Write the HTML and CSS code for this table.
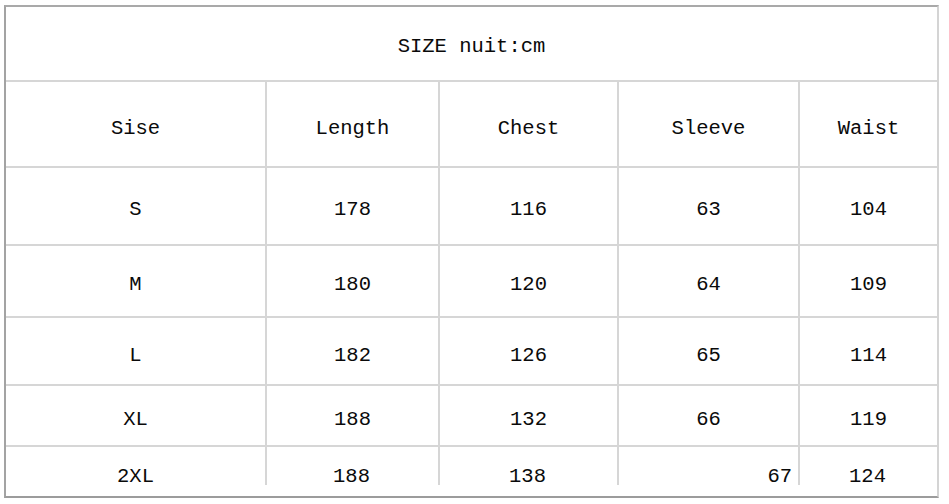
FILE: index.html
```html
<!DOCTYPE html>
<html lang="en">
<head>
<meta charset="utf-8">
<title>SIZE nuit:cm</title>
<link rel="stylesheet" href="styles.css">
</head>
<body>
<div class="sheet">
  <div class="title">SIZE nuit:cm</div>
  <div class="row row-head">
    <div class="cell">Sise</div>
    <div class="cell">Length</div>
    <div class="cell">Chest</div>
    <div class="cell">Sleeve</div>
    <div class="cell">Waist</div>
  </div>
  <div class="row row-s">
    <div class="cell">S</div>
    <div class="cell">178</div>
    <div class="cell">116</div>
    <div class="cell">63</div>
    <div class="cell">104</div>
  </div>
  <div class="row row-m">
    <div class="cell">M</div>
    <div class="cell">180</div>
    <div class="cell">120</div>
    <div class="cell">64</div>
    <div class="cell">109</div>
  </div>
  <div class="row row-l">
    <div class="cell">L</div>
    <div class="cell">182</div>
    <div class="cell">126</div>
    <div class="cell">65</div>
    <div class="cell">114</div>
  </div>
  <div class="row row-xl">
    <div class="cell">XL</div>
    <div class="cell">188</div>
    <div class="cell">132</div>
    <div class="cell">66</div>
    <div class="cell">119</div>
  </div>
  <div class="row row-last">
    <div class="cell">2XL</div>
    <div class="cell">188</div>
    <div class="cell">138</div>
    <div class="cell cell-right">67</div>
    <div class="cell">124</div>
  </div>
</div>
</body>
</html>
```

FILE: styles.css
```css
html, body {
  margin: 0;
  padding: 0;
  background: #ffffff;
}

body {
  font-family: "Liberation Mono", "DejaVu Sans Mono", monospace;
  font-size: 20.5px;
  color: #0a0a0a;
}

.sheet {
  box-sizing: border-box;
  width: 935px;
  margin: 5px 0 0 4px;
  border-top: 2px solid #a9a9a9;
  border-left: 2px solid #a3a3a3;
  border-right: 2px solid #d4d4d4;
  border-bottom: 2px solid #9c9c9c;
  display: flex;
  flex-direction: column;
}

.title {
  box-sizing: border-box;
  height: 75px;
  border-bottom: 2px solid #d6d6d6;
  display: flex;
  align-items: center;
  justify-content: center;
  padding-top: 6px;
}

.row {
  display: grid;
  grid-template-columns: 259px 173px 179px 181px 139px;
  box-sizing: border-box;
  border-bottom: 2px solid #d6d6d6;
}

.row-head { height: 86px; }
.row-s    { height: 78px; }
.row-m    { height: 72px; }
.row-l    { height: 68px; }
.row-xl   { height: 61px; }
.row-last { height: 49px; border-bottom: none; }

.cell {
  box-sizing: border-box;
  display: flex;
  align-items: center;
  justify-content: center;
  padding-top: 7px;
  border-left: 2px solid #d6d6d6;
}

.cell:first-child {
  border-left: none;
}

.row-head .cell { padding-top: 8px; }
.row-l .cell { padding-top: 9px; }

.row-last .cell {
  border-left: none;
  padding-top: 10px;
  background: linear-gradient(#d6d6d6, #d6d6d6) left top / 2px 38px no-repeat;
}

.row-last .cell:first-child {
  background: none;
}

.row-last .cell-right {
  justify-content: flex-end;
  padding-right: 6px;
}
```
